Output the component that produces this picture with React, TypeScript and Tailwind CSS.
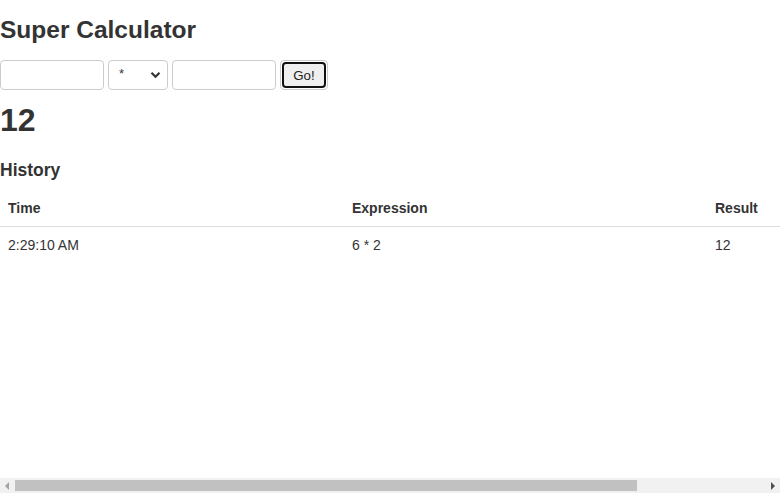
import React from "react";

export default function App() {
  return (
    <div
      className="bg-white text-[#333] w-[780px] h-[493px] flex flex-col overflow-hidden"
      style={{ fontFamily: '"Liberation Sans", Arial, sans-serif' }}
    >
      <div className="flex-1 overflow-hidden">
        <div className="w-[940px]">
          <h2 className="text-[24.5px] font-bold leading-[26px] pt-[17px] m-0">Super Calculator</h2>
          <div className="flex items-center gap-[4px] mt-[17px] h-[30px]">
            <div className="w-[104px] h-[30px] border border-[#ccc] rounded-[4px] bg-white" />
            <div className="w-[60px] h-[30px] border border-[#ccc] rounded-[4px] bg-white flex items-center justify-between pl-[10px] pr-[6px] text-[13px] text-[#333]">
              <span className="relative top-[-1px]">*</span>
              <svg width="11" height="8" viewBox="0 0 11 8">
                <path d="M1.5 1.8 L5.5 5.8 L9.5 1.8" fill="none" stroke="#333" strokeWidth="2.2" />
              </svg>
            </div>
            <div className="w-[104px] h-[30px] border border-[#ccc] rounded-[4px] bg-white" />
            <div className="w-[48px] h-[30px] border border-[#ccc] rounded-[4px] p-[1px] bg-white">
              <div className="w-full h-full border-2 border-[#111] rounded-[4px] bg-[#efefef] flex items-center justify-center text-[13.33px] text-[#222] pt-[1px]">
                Go!
              </div>
            </div>
          </div>
          <div className="text-[32px] font-bold leading-[36px] mt-[12px]">12</div>
          <h3 className="text-[17.5px] font-bold leading-[20px] mt-[22px]">History</h3>
          <table className="w-[940px] border-collapse mt-[10px] text-[14px] leading-[20px]">
            <colgroup>
              <col className="w-[344px]" />
              <col className="w-[363px]" />
              <col className="w-[233px]" />
            </colgroup>
            <thead>
              <tr>
                <th className="text-left font-bold p-[8px] border-b border-[#ddd]">Time</th>
                <th className="text-left font-bold p-[8px] border-b border-[#ddd]">Expression</th>
                <th className="text-left font-bold p-[8px] border-b border-[#ddd]">Result</th>
              </tr>
            </thead>
            <tbody>
              <tr>
                <td className="p-[8px]">2:29:10 AM</td>
                <td className="p-[8px]">6 * 2</td>
                <td className="p-[8px]">12</td>
              </tr>
            </tbody>
          </table>
        </div>
      </div>
      <div className="h-[15px] bg-[#f1f1f1] flex items-center shrink-0">
        <div className="w-[15px] h-[15px] flex items-center justify-center">
          <svg width="5" height="8" viewBox="0 0 5 8">
            <path d="M4 0 L0 4 L4 8 Z" fill="#a3a3a3" />
          </svg>
        </div>
        <div className="w-[622px] h-[11px] bg-[#c1c1c1]" />
        <div className="flex-1" />
        <div className="w-[15px] h-[15px] flex items-center justify-center">
          <svg width="5" height="8" viewBox="0 0 5 8">
            <path d="M1 0 L5 4 L1 8 Z" fill="#505050" />
          </svg>
        </div>
      </div>
    </div>
  );
}
